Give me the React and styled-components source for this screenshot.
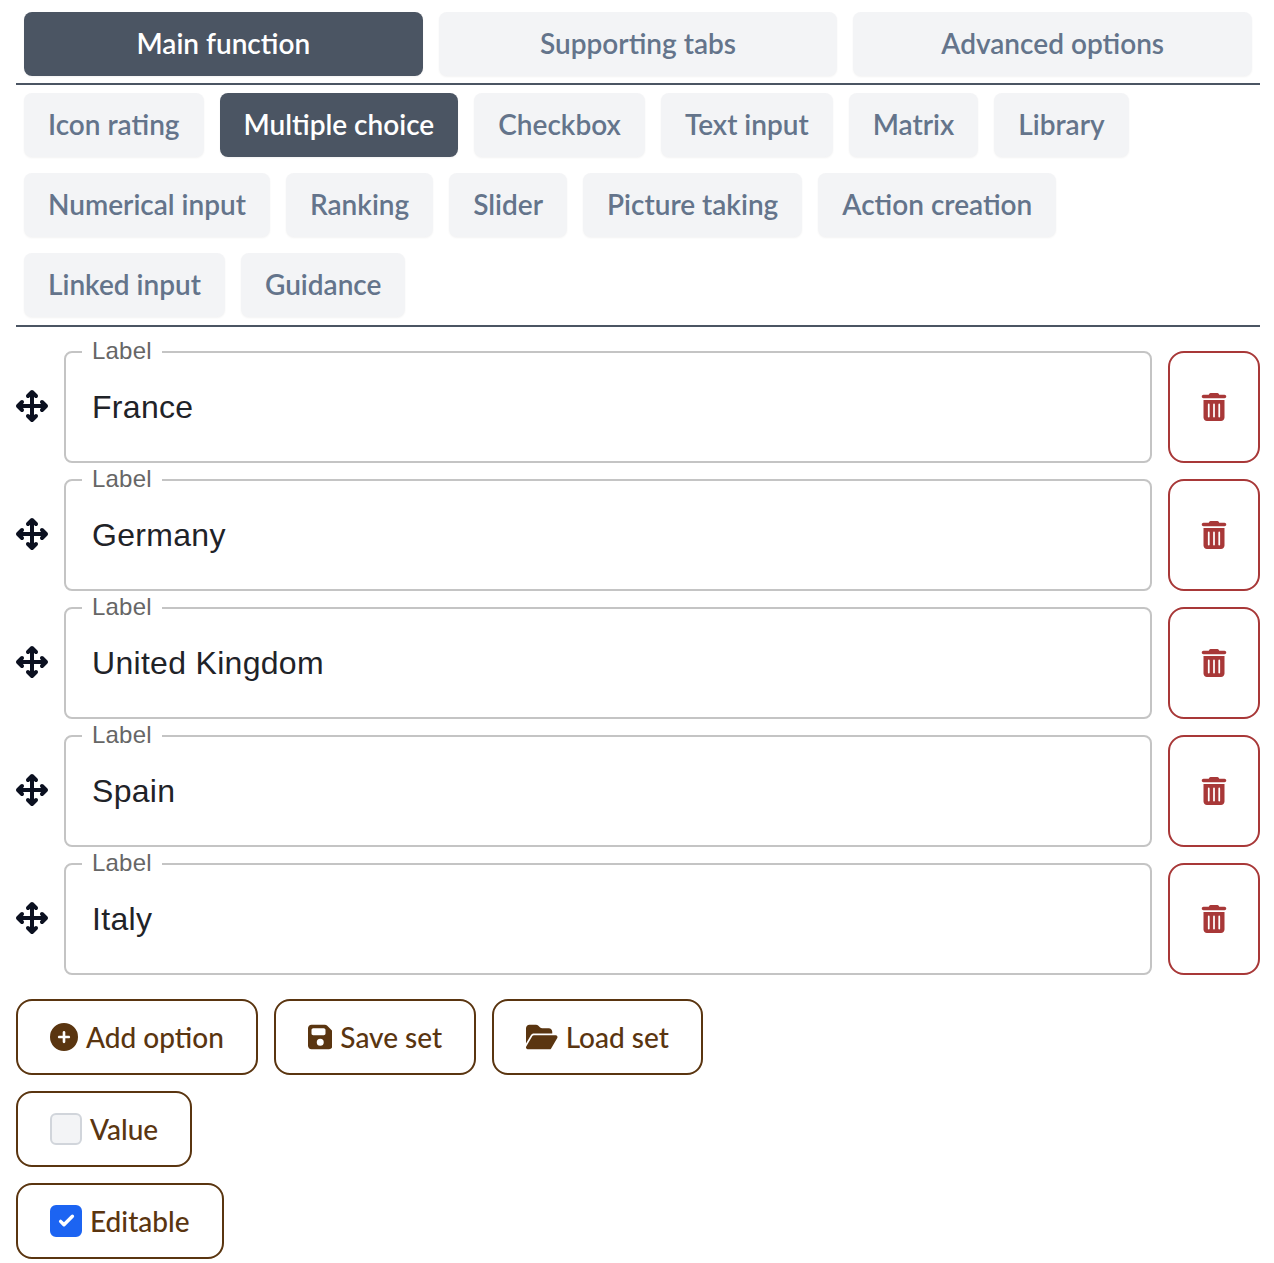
import React from 'react'
import styled, { createGlobalStyle } from 'styled-components'
import { FaArrowsUpDownLeftRight, FaTrashCan, FaCirclePlus, FaFloppyDisk, FaFolderOpen } from 'react-icons/fa6'

const Global = createGlobalStyle`
    * { box-sizing: border-box; }
    body {
        margin: 0;
        background: #fff;
        font-family: Lato, "Noto Sans", sans-serif;
    }
`

const mainTabs = ['Main function', 'Supporting tabs', 'Advanced options']
const subTabs = [
    'Icon rating', 'Multiple choice', 'Checkbox', 'Text input', 'Matrix', 'Library',
    'Numerical input', 'Ranking', 'Slider', 'Picture taking', 'Action creation',
    'Linked input', 'Guidance',
]
const options = ['France', 'Germany', 'United Kingdom', 'Spain', 'Italy']

export default function App() {
    return (
        <Page>
            <Global />
            <MainTabs>
                {mainTabs.map((t, i) => <MainTab key={t} $active={i === 0}>{t}</MainTab>)}
            </MainTabs>
            <SubTabs>
                {subTabs.map((t) => <Tab key={t} $active={t === 'Multiple choice'}>{t}</Tab>)}
            </SubTabs>
            <OptionList>
                {options.map((o) => (
                    <OptionRow key={o}>
                        <DragHandle><FaArrowsUpDownLeftRight size={32} /></DragHandle>
                        <Field>
                            <FieldLabel>Label</FieldLabel>
                            <FieldInput defaultValue={o} />
                        </Field>
                        <DeleteButton><FaTrashCan size={28} /></DeleteButton>
                    </OptionRow>
                ))}
            </OptionList>
            <ActionRow>
                <ActionButton><FaCirclePlus size={28} />Add option</ActionButton>
                <ActionButton><SaveIcon />Save set</ActionButton>
                <ActionButton><FolderIcon />Load set</ActionButton>
            </ActionRow>
            <ActionRow>
                <ActionButton as="label">
                    <CheckBox />
                    Value
                </ActionButton>
            </ActionRow>
            <ActionRow>
                <ActionButton as="label">
                    <CheckBox $checked>
                        <svg viewBox="0 0 16 16" width="27" height="27" fill="#fff">
                            <path d="M12.207 4.793a1 1 0 010 1.414l-5 5a1 1 0 01-1.414 0l-2-2a1 1 0 011.414-1.414L6.5 9.086l4.293-4.293a1 1 0 011.414 0z" />
                        </svg>
                    </CheckBox>
                    Editable
                </ActionButton>
            </ActionRow>
        </Page>
    )
}

//styles
const Page = styled.div`
    padding: 12px 14px 4px 16px;
`
const MainTabs = styled.div`
    display: flex;
    gap: 16px;
    padding: 0 8px 7px;
    border-bottom: 2px solid #4b5563;
`
const Tab = styled.button`
    height: 64px;
    padding: 0 24px 2px;
    border: none;
    border-radius: 8px;
    background: ${(p) => (p.$active ? '#4b5563' : '#f3f4f6')};
    color: ${(p) => (p.$active ? '#fff' : '#64748b')};
    box-shadow: 0 1px 2px rgba(0, 0, 0, 0.05);
    font-family: inherit;
    font-size: 28px;
    font-weight: 600;
    white-space: nowrap;
`
const MainTab = styled(Tab)`
    flex: 1;
`
const SubTabs = styled.div`
    display: flex;
    flex-wrap: wrap;
    gap: 16px;
    padding: 8px;
    border-bottom: 2px solid #4b5563;
`
const OptionList = styled.div`
    display: flex;
    flex-direction: column;
    gap: 16px;
    padding: 24px 0;
`
const OptionRow = styled.div`
    display: flex;
    align-items: center;
    gap: 16px;
    height: 112px;
`
const DragHandle = styled.span`
    display: flex;
    color: #0b1020;
    margin-top: -2px;
`
const Field = styled.fieldset`
    flex: 1;
    height: 112px;
    margin: 0;
    padding: 0 26px;
    border: 2px solid #c4c4c4;
    border-radius: 8px;
    display: flex;
    align-items: center;
    min-width: 0;
`
const FieldLabel = styled.legend`
    height: 2px;
    line-height: 0;
    padding: 0 10px;
    margin-left: -10px;
    font-family: "Liberation Sans", sans-serif;
    font-size: 24px;
    letter-spacing: 0.2px;
    color: #666;
`
const FieldInput = styled.input`
    width: 100%;
    border: none;
    outline: none;
    padding: 0;
    background: transparent;
    font-family: "Liberation Sans", sans-serif;
    font-size: 32px;
    letter-spacing: 0.3px;
    color: #1f2328;
`
const DeleteButton = styled.button`
    width: 92px;
    height: 112px;
    padding: 0;
    background: #fff;
    border: 2px solid #a83838;
    border-radius: 16px;
    color: #a83838;
    display: flex;
    align-items: center;
    justify-content: center;
`
const ActionRow = styled.div`
    display: flex;
    gap: 16px;
    margin-bottom: 16px;
`
const ActionButton = styled.button`
    height: 76px;
    padding: 0 32px 1px;
    background: #fff;
    border: 2px solid #5a3510;
    border-radius: 16px;
    color: #5a3510;
    font-family: inherit;
    font-size: 28px;
    font-weight: 500;
    display: flex;
    align-items: center;
    gap: 8px;
`
const SaveIcon = styled(FaFloppyDisk)`
    width: 24.5px;
    height: 28px;
`
const FolderIcon = styled(FaFolderOpen)`
    width: 31.5px;
    height: 28px;
`
const CheckBox = styled.span`
    width: 32px;
    height: 32px;
    border-radius: 6px;
    border: 2px solid ${(p) => (p.$checked ? '#1c64f2' : '#d1d5db')};
    background: ${(p) => (p.$checked ? '#1c64f2' : '#f3f4f6')};
    display: flex;
    align-items: center;
    justify-content: center;
    svg { flex: none; }
`
